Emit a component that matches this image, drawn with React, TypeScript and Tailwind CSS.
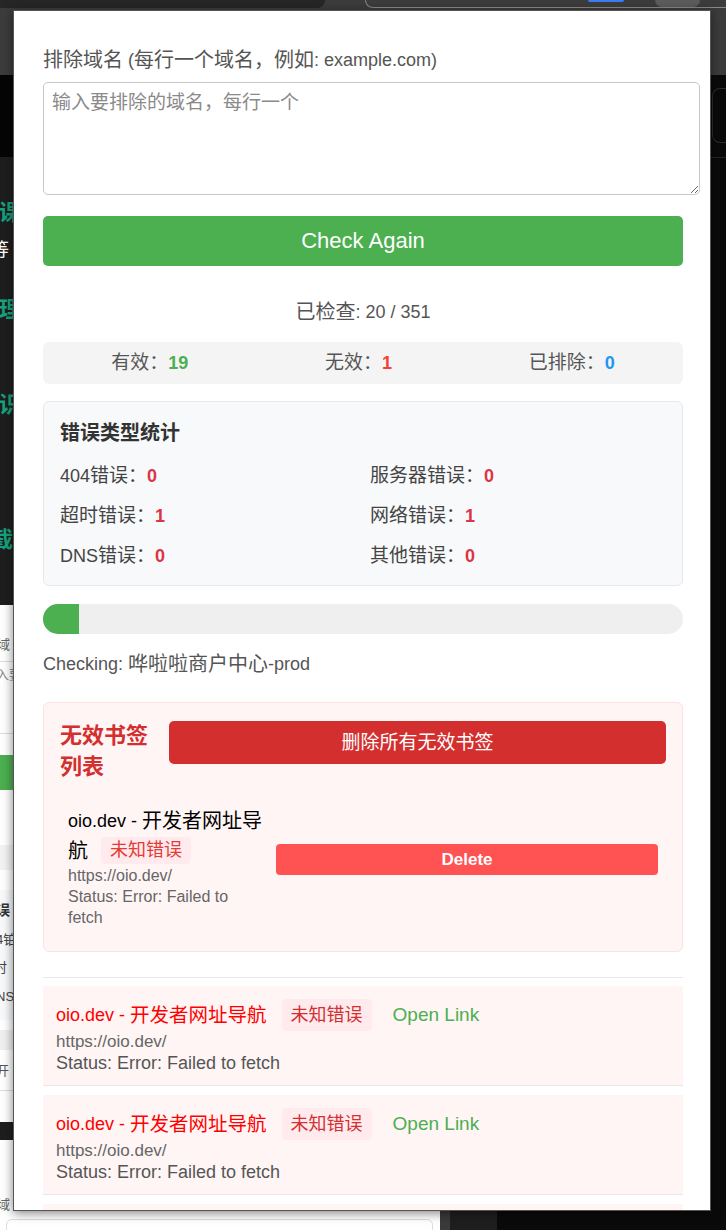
import React from "react";

const CJK_RE = /([\u2e80-\u9fff\u3000-\u303f\uff00-\uffef]+)/;

function T({ s, k }: { s: string; k: string }) {
  const parts = s.split(CJK_RE);
  return (
    <>
      {parts.map((p, i) =>
        i % 2 === 1 ? (
          <span key={i} className={k}>
            {p}
          </span>
        ) : (
          <React.Fragment key={i}>{p}</React.Fragment>
        )
      )}
    </>
  );
}

function TopChrome() {
  return (
    <div className="h-[75px] shrink-0 bg-[#3c3c3c]">
      <div className="flex h-[8px]">
        <div className="w-[325px] h-[8px] bg-[#262626] rounded-br-[12px]" />
        <div className="ml-[40px] flex-1 h-[8px] border-l border-b border-[#8a8a8a] rounded-bl-[14px] flex">
          <div className="ml-[222px] w-[36px] h-[2px] bg-[#3b7cf5] rounded-b-[2px]" />
          <div className="ml-[31px] w-[45px] h-[7px] bg-[#5c5c5c] rounded-b-full" />
        </div>
      </div>
    </div>
  );
}

function LeftStrip() {
  return (
    <div className="w-[13px] shrink-0 flex flex-col overflow-hidden whitespace-nowrap">
      <div className="h-[82px] bg-[#050505]" />
      <div className="h-[448px] bg-[#1e1e1e] flex flex-col pt-[44px] font-bold">
        <div className="-ml-[1px] text-[22px] leading-[24px] text-[#16a37f]">课</div>
        <div className="mt-[14px] -ml-[9px] text-[18px] leading-[22px] text-white font-normal">等</div>
        <div className="mt-[37px] -ml-[1px] text-[22px] leading-[24px] text-[#16a37f]">理</div>
        <div className="mt-[11px] -ml-[9px] text-[18px] leading-[22px] text-white font-normal">，</div>
        <div className="mt-[38px] -ml-[1px] text-[22px] leading-[24px] text-[#16a37f]">识</div>
        <div className="mt-[21px] -ml-[9px] text-[18px] leading-[22px] text-white font-normal">。</div>
        <div className="mt-[68px] -ml-[9px] text-[22px] leading-[24px] text-[#16a37f]">截</div>
      </div>
      <div className="h-[517px] bg-white flex flex-col pt-[32px] text-[#666] text-[13px] leading-[16px]">
        <div className="-ml-[3px]">域</div>
        <div className="mt-[8px] h-px bg-[#ddd]" />
        <div className="mt-[5px] -ml-[4px] text-[#888]">入要</div>
        <div className="mt-[50px] h-px bg-[#ddd]" />
        <div className="mt-[21px] h-[35px] bg-[#4caf50]" />
        <div className="mt-[55px] h-[25px] bg-[#f3f3f3]" />
        <div className="mt-[20px] h-[130px] bg-[#f8f9fa] flex flex-col pt-[12px] text-[#444]">
          <div className="-ml-[4px] text-[14px] font-bold text-[#333]">误</div>
          <div className="mt-[14px] -ml-[4px]">4铂</div>
          <div className="mt-[12px] -ml-[6px]">时</div>
          <div className="mt-[13px] -ml-[4px]">NS</div>
        </div>
        <div className="mt-[10px] h-[20px] bg-[#f0f0f0]" />
        <div className="mt-[13px] -ml-[4px] text-[#555]">开</div>
        <div className="mt-[11px] h-px bg-[#ddd]" />
      </div>
      <div className="h-[18px] bg-[#1e1e1e]" />
    </div>
  );
}

function ListItem() {
  return (
    <div className="mb-[9px] bg-[#fff5f5] border-b border-[#e8e8e8] px-[13px] pt-[13px] pb-[11px]">
      <div className="flex items-center h-[32px]">
        <span className="text-[18px] leading-[32px] text-[#ff0000]">
          <T s="oio.dev - 开发者网址导航" k="text-[19.5px] align-top" />
        </span>
        <span className="ml-[15px] h-[32px] px-[9px] rounded-[4px] bg-[#ffebee] text-[#d32f2f] leading-[32px]">
          <T s="未知错误" k="text-[18px] align-top" />
        </span>
        <span className="ml-[21px] text-[19px] leading-[32px] text-[#4caf50]">Open Link</span>
      </div>
      <div className="text-[17px] leading-[21px] text-[#666]">https://oio.dev/</div>
      <div className="text-[18px] leading-[22px] text-[#555]">Status: Error: Failed to fetch</div>
    </div>
  );
}

function Stat({ label, value, color }: { label: string; value: string; color: string }) {
  return (
    <span>
      <T s={label} k="text-[19px] align-top" />
      <span className={`font-bold ${color}`}>{value}</span>
    </span>
  );
}

export default function App() {
  const checked = 20;
  const total = 351;
  const pct = (checked / total) * 100;

  const errors: [string, string][] = [
    ["404错误：", "0"],
    ["服务器错误：", "0"],
    ["超时错误：", "1"],
    ["网络错误：", "1"],
    ["DNS错误：", "0"],
    ["其他错误：", "0"],
  ];

  return (
    <div className="relative w-[726px] h-[1230px] overflow-hidden bg-[#0a0a0a] flex flex-col font-['Liberation_Sans','Noto_Sans_CJK_SC',sans-serif]">
      {/* desktop behind the popup */}
      <TopChrome />
      <div className="h-[1065px] shrink-0 flex">
        <LeftStrip />
        <div className="flex-1 flex flex-col items-end">
          <div className="mt-[13px] w-[14px] h-[55px] border-l border-y border-[#2e2e2e] rounded-l-[8px]" />
          <div className="mt-[14px] w-[26px] h-px bg-[#262626]" />
        </div>
      </div>
      <div className="flex-1 flex">
        <div className="w-[440px] bg-white pt-[57px] text-[13px] leading-[16px] text-[#666] overflow-hidden">
          <div className="-ml-[3px]">域</div>
          <div className="mt-[6px] ml-[6px] w-[427px] h-[40px] border border-[#ddd] rounded-[6px]" />
        </div>
        <div className="w-[10px] bg-[#3a3a3a]" />
        <div className="w-[47px] bg-[#1e1e1e]" />
      </div>

      {/* extension popup window */}
      <div className="absolute left-[13px] top-[10px] w-[698px] h-[1201px] overflow-hidden bg-white border border-[#555] shadow-[0_2px_10px_rgba(0,0,0,0.5)]">
        <div className="pl-[29px] pt-[37px] w-[669px]">
          <div className="text-[18px] leading-[24px] text-[#555]">
            <T s="排除域名 (每行一个域名，例如: example.com)" k="text-[20px] align-top" />
          </div>

          <textarea
            placeholder="输入要排除的域名，每行一个"
            className="block mt-[10px] w-[657px] h-[113px] border border-[#c8c8c8] rounded-[5px] px-[8px] py-[9px] text-[19px] leading-[22px] text-[#333] placeholder:text-[#8a8a8a] outline-none bg-white"
          />

          <button className="block mt-[21px] w-full h-[50px] rounded-[5px] bg-[#4caf50] text-white text-[22px] leading-[50px]">
            Check Again
          </button>

          <div className="mt-[34px] text-center text-[18px] leading-[24px] text-[#555]">
            <T s="已检查: 20 / 351" k="text-[20px] align-top" />
          </div>

          <div className="mt-[18px] h-[42px] rounded-[6px] bg-[#f4f4f4] flex items-center justify-around text-[18px] leading-[24px] text-[#555]">
            <Stat label="有效：" value="19" color="text-[#4caf50]" />
            <Stat label="无效：" value="1" color="text-[#f44336]" />
            <Stat label="已排除：" value="0" color="text-[#2196f3]" />
          </div>

          <div className="mt-[17px] rounded-[6px] border border-[#e6e8eb] bg-[#f8f9fa] px-[16px] pt-[16px] pb-[17px]">
            <div className="font-bold text-[18px] leading-[30px] text-[#333]">
              <T s="错误类型统计" k="text-[20px] align-top" />
            </div>
            <div className="mt-[16px] grid grid-cols-2 gap-x-[14px] gap-y-[16px] text-[18px] leading-[24px] text-[#444]">
              {errors.map(([l, v]) => (
                <div key={l}>
                  <T s={l} k="text-[19px] align-top" />
                  <span className="font-bold text-[#dc3545]">{v}</span>
                </div>
              ))}
            </div>
          </div>

          <div className="mt-[18px] h-[30px] rounded-full bg-[#efefef] overflow-hidden">
            <div className="h-full bg-[#4caf50]" style={{ width: `${pct}%` }} />
          </div>

          <div className="mt-[18px] text-[18px] leading-[24px] text-[#555]">
            <T s="Checking: 哗啦啦商户中心-prod" k="text-[20px] align-top" />
          </div>

          <div className="mt-[26px] rounded-[6px] border border-[#fde2e2] bg-[#fff5f5] px-[16px] pt-[17px] pb-[15px]">
            <div className="flex items-start gap-[14px]">
              <div className="w-[95px] shrink-0 font-bold text-[20px] leading-[31px] text-[#d32f2f]">
                <T s="无效书签列表" k="text-[22px] align-top" />
              </div>
              <button className="flex-1 mt-[1px] h-[43px] rounded-[5px] bg-[#d32f2f] text-white text-[17px] leading-[43px]">
                <T s="删除所有无效书签" k="text-[19px] align-top" />
              </button>
            </div>

            <div className="mt-[16px] flex items-start px-[8px] py-[8px]">
              <div className="w-[196px] shrink-0">
                <div className="text-[18px] leading-[30px] text-black">
                  <T s="oio.dev - 开发者网址导航" k="text-[20px] align-top" />
                  <span className="inline-block align-top mt-[1px] ml-[13px] h-[27px] px-[9px] rounded-[4px] bg-[#ffebee] text-[#e53935] text-[16px] leading-[27px]">
                    <T s="未知错误" k="text-[18px] align-top" />
                  </span>
                </div>
                <div className="text-[16px] leading-[20px] text-[#666]">https://oio.dev/</div>
                <div className="text-[16px] leading-[21px] text-[#666]">Status: Error: Failed to fetch</div>
              </div>
              <button className="ml-[12px] flex-1 mt-[38px] h-[31px] rounded-[4px] bg-[#ff5252] text-white font-bold text-[17px] leading-[31px]">
                Delete
              </button>
            </div>
          </div>

          <div className="mt-[25px] h-px bg-[#e8e8e8]" />

          <div className="mt-[8px]">
            <ListItem />
            <ListItem />
            <ListItem />
          </div>
        </div>
      </div>
    </div>
  );
}
